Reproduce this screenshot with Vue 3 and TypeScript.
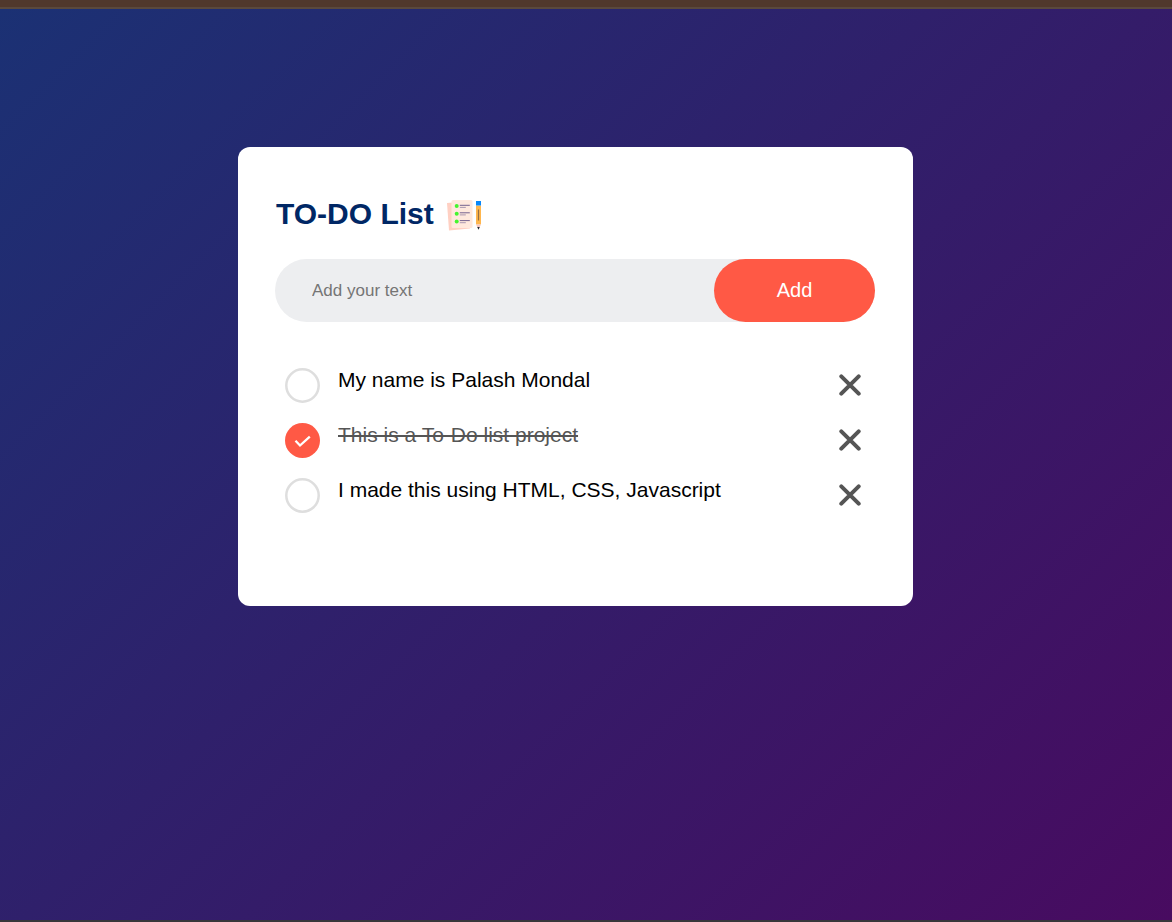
<script setup lang="ts">
import { ref } from 'vue'

interface Task {
  id: number
  text: string
  done: boolean
}

const tasks = ref<Task[]>([
  { id: 1, text: 'My name is Palash Mondal', done: false },
  { id: 2, text: 'This is a To-Do list project', done: true },
  { id: 3, text: 'I made this using HTML, CSS, Javascript', done: false },
])
const draft = ref('')
let nextId = 4

function addTask() {
  const text = draft.value.trim()
  if (!text) return
  tasks.value.push({ id: nextId++, text, done: false })
  draft.value = ''
}

function removeTask(id: number) {
  tasks.value = tasks.value.filter((task) => task.id !== id)
}
</script>

<template>
  <div class="page">
    <main class="todo">
      <h1 class="title">
        TO-DO List
        <svg class="logo" viewBox="0 0 38 38" aria-hidden="true">
          <path d="M1 6 L19 4.5 L24 31.5 L3 33.5 Z" fill="#ffd0c3" />
          <rect x="5.5" y="3" width="21" height="28" rx="1.5" fill="#ffe8dd" />
          <g fill="#45f52f">
            <circle cx="10.7" cy="9" r="2" />
            <circle cx="10.7" cy="16.7" r="2" />
            <circle cx="10.7" cy="24.5" r="2" />
          </g>
          <g stroke="#75628f" stroke-width="1">
            <path d="M13.8 8.3h10M13.8 15.8h10M13.8 23.6h10" />
            <path d="M13.8 10.4h6M13.8 17.9h6M13.8 25.7h6" stroke="#ab97b0" />
          </g>
          <path d="M30 8.5h5v19h-5z" fill="#ffb64d" />
          <path d="M30 4h5v4.5h-5z" fill="#0787fa" />
          <path d="M32.5 12.5v11" stroke="#967044" stroke-width="1.2" />
          <path d="M30 27.5h5l-1.5 3h-2z" fill="#f7c6bd" />
          <path d="M31.2 30h2.6l-1.3 2.8z" fill="#252832" />
        </svg>
      </h1>

      <form class="entry" @submit.prevent="addTask">
        <input v-model="draft" class="field" type="text" placeholder="Add your text" aria-label="New task" />
        <button class="add" type="submit">Add</button>
      </form>

      <ul class="list">
        <li v-for="task in tasks" :key="task.id" class="item">
          <label class="task">
            <input v-model="task.done" class="native" type="checkbox" />
            <svg class="mark" viewBox="0 0 35 35" aria-hidden="true">
              <template v-if="task.done">
                <circle cx="17.5" cy="17.5" r="17.5" fill="#ff5945" />
                <path d="M10.5 17.8 L15 22.5 L24.8 13.6" fill="none" stroke="#fff" stroke-width="2.3" />
              </template>
              <circle v-else cx="17.5" cy="17.5" r="16.2" fill="#fff" stroke="#dedede" stroke-width="2.5" />
            </svg>
            <span class="text" :class="{ done: task.done }">{{ task.text }}</span>
          </label>
          <button class="remove" type="button" :aria-label="`Delete ${task.text}`" @click="removeTask(task.id)">
            <svg viewBox="0 0 22 22" aria-hidden="true">
              <path d="M2.3 2.3 L19.7 19.7 M19.7 2.3 L2.3 19.7" stroke="#555" stroke-width="4" stroke-linecap="round" />
            </svg>
          </button>
        </li>
      </ul>
    </main>
  </div>
</template>

<style>
body {
  margin: 0;
}
</style>

<style scoped>
.page {
  box-sizing: border-box;
  min-height: 100vh;
  padding: 138px 31px 40px 10px;
  border-top: 9px solid #50382c;
  border-bottom: 2px solid #38363a;
  background: linear-gradient(135deg, #1b3174, #480b60) padding-box;
  font-family: "Liberation Sans", Arial, sans-serif;
  position: relative;
}

.page::before {
  content: "";
  position: absolute;
  top: -2px;
  left: 0;
  right: 0;
  height: 2px;
  background: #5a493d;
}

.todo {
  box-sizing: border-box;
  max-width: 675px;
  margin: 0 auto;
  padding: 50px 38px 83px 37px;
  border-radius: 12px;
  background: #fff;
}

.title {
  display: flex;
  align-items: flex-start;
  gap: 12px;
  height: 37px;
  margin: 0 0 25px;
  padding-left: 1px;
  color: #002765;
  font-size: 30px;
  line-height: 34px;
}

.logo {
  width: 38px;
  height: 38px;
}

.entry {
  display: flex;
  height: 63px;
  margin-bottom: 36px;
  border-radius: 32px;
  background: #edeef0;
}

.field {
  flex: 1;
  min-width: 0;
  padding: 0 12px 0 37px;
  border: 0;
  outline: 0;
  background: transparent;
  color: #000;
  font: 17px "Liberation Sans", Arial, sans-serif;
}

.field::placeholder {
  color: #757575;
}

.add {
  width: 161px;
  padding: 0;
  border: 0;
  border-radius: 32px;
  background: #ff5945;
  color: #fff;
  font: 20px "Liberation Sans", Arial, sans-serif;
  cursor: pointer;
}

.list {
  margin: 0;
  padding: 0;
  list-style: none;
}

.item {
  display: flex;
  align-items: center;
  min-height: 55px;
}

.task {
  display: flex;
  flex: 1;
  align-items: center;
  gap: 18px;
  padding-left: 10px;
  cursor: pointer;
}

.native {
  position: absolute;
  opacity: 0;
}

.mark {
  flex: none;
  width: 35px;
  height: 35px;
}

.text {
  padding-bottom: 11px;
  color: #000;
  font-size: 21px;
  line-height: 24px;
}

.done {
  color: #555;
  text-decoration: line-through;
}

.remove {
  display: grid;
  place-items: center;
  width: 50px;
  height: 50px;
  padding: 0 0 2px;
  border: 0;
  background: transparent;
  cursor: pointer;
}

.remove svg {
  width: 22px;
  height: 22px;
}
</style>
